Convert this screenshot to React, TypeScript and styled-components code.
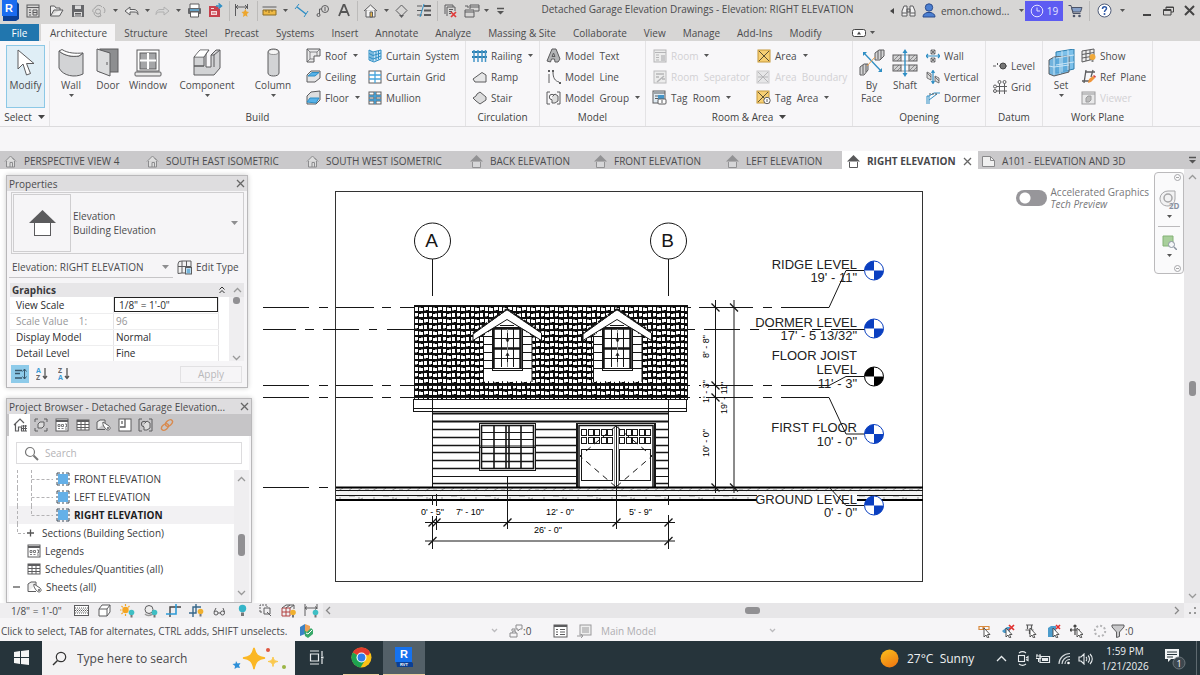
import React from "react";
import styled, { createGlobalStyle, css } from "styled-components";

const GlobalStyle = createGlobalStyle`
  * { box-sizing: border-box; }
  html, body { margin: 0; padding: 0; }
  body { background: #fff; color: #4b4b4d; font-family: "Open Sans", "Noto Sans", sans-serif; font-size: 10px; line-height: 14px; }
  button, input, select { font: inherit; color: inherit; margin: 0; padding: 0; border: 0; background: none; border-radius: 0; outline: none; }
  svg { display: block; flex: none; }
`;

/* ---------- icons ---------- */

const G = "#5c5c5e";
const B = "#2f8ec4";

type IconDef = { w: number; h: number; art: React.ReactNode };

const icons: Record<string, IconDef> = {
  revit: { w: 20, h: 21, art: <><path d="M3 1h13l3 3v15l-3 2H3z" fill="#0b3f94" /><rect x="2" y="0" width="15" height="16" fill="#1a6cf0" /><text x="9" y="12" fontSize="11" fontWeight="700" fill="#fff" textAnchor="middle" fontFamily="Liberation Sans, sans-serif">R</text></> },
  list: { w: 14, h: 14, art: <g fill="none" stroke={G}><rect x="1" y="1" width="12" height="12" /><path d="M1 3.500h12M3 6h2M3 8.500h2M3 11h2M7 6h4v5H7zM7 8.500h4" /></g> },
  open: { w: 15, h: 14, art: <path d="M1.500 12V2h4l1.500 2h4v2M1.500 12h9l3.500-6H5z" fill="#eee" stroke={G} /> },
  save: { w: 14, h: 14, art: <><path d="M1 1h12v12H1z" fill="#66676a" /><path d="M4 1.500h6v3.500H4zM3 8h8v4.500H3z" fill="#dcdcdc" /><path d="M4 9.500h6M4 11h6" stroke={G} /></> },
  sync: { w: 15, h: 14, art: <g fill="none" stroke="#a3a3a3"><path d="M2 8a3 3 0 0 1 2-4 4 4 0 0 1 7-1M3 8a4 4 0 0 0 6 4M12 3a4 4 0 0 1 1 6M9 9l1 3-3 1" /><circle cx="7" cy="7.500" r="2.500" /></g> },
  undo: { w: 15, h: 12, art: <path d="M1 6l5-4v2.500h4c2 0 4 1.500 4 5-1-2-2-2.500-4-2.500H6V10z" fill="#eee" stroke={G} /> },
  redo: { w: 15, h: 12, art: <path d="M14 6L9 2v2.500H5c-2 0-4 1.500-4 5 1-2 2-2.500 4-2.500h4V10z" fill="#d6d6d6" stroke="#b0b0b0" /> },
  print: { w: 15, h: 15, art: <><path d="M3 5V1h9v4" fill="#fff" stroke={G} /><rect x="1" y="5" width="13" height="6" rx="1" fill="#66676a" /><path d="M3 7h9" stroke="#62b5e5" strokeWidth="1.500" /><path d="M3.500 9h8v5h-8z" fill="#fff" stroke={G} /></> },
  pdf: { w: 15, h: 15, art: <><path d="M1 3h8l3 3v8H1z" fill="#c7414d" /><path d="M3 8h6v4H3zM3 5h3v1H3z" fill="#f4d9db" /><path d="M4 10h4" stroke="#c7414d" /><path d="M8 3h5M10.500 .500L13.500 3l-3 2.500" stroke={B} fill="none" strokeWidth="1.500" /></> },
  align: { w: 16, h: 15, art: <><path d="M1.500 1v12M13.500 1v5M2 4h11M4 2L2 4l2 2M11 2l2 2-2 2" fill="none" stroke={G} /><path d="M11.500 6l1 2.500 2.500.500-2 2 .500 3-2-1.500-2.500 1.500.500-3-2-2 2.500-.500z" fill="#eda62d" /></> },
  ruler: { w: 15, h: 10, art: <><path d="M.500 1h14" stroke={G} /><path d="M1 4h13v5H1z" fill="#efb944" stroke="#8b6c25" /><path d="M4 4v2M7 4v3M10 4v2" stroke="#8b6c25" /></> },
  dim: { w: 15, h: 15, art: <><path d="M3 4l9 7" stroke={B} strokeWidth="1.500" /><path d="M5 1L1 6M14 8l-4 6" stroke={B} /></> },
  tag: { w: 14, h: 14, art: <g fill="none" stroke={G}><circle cx="9" cy="5" r="3.500" /><path d="M5.500 5h-2v5M9 3v4" /><circle cx="2.500" cy="11" r="1.500" /></g> },
  letterA: { w: 12, h: 13, art: <path d="M1 12L5.500 1h1L11 12M3 8h6" fill="none" stroke="#555" strokeWidth="1.800" /> },
  house: { w: 15, h: 14, art: <><path d="M1 7l6.500-6L14 7M3 6v7h9V6" fill="#f2f2f2" stroke={G} /><path d="M7 8h2.500v5H7z" fill="#e8b64b" stroke={G} /></> },
  diamond: { w: 13, h: 14, art: <><path d="M6.500 1L12 6.500 6.500 12 1 6.500z" fill="none" stroke={G} /><path d="M4 11h5l-2.500 3z" fill={G} /></> },
  thin: { w: 15, h: 13, art: <><path d="M1 2h5M1 6.500h5M1 11h5" stroke={G} /><path d="M8 2h7M8 6.500h7M8 11h7" stroke={G} strokeWidth="2" /><path d="M8 0L4 13" stroke={B} /></> },
  closeViews: { w: 15, h: 14, art: <><path d="M2 10V1h8v2M4 12V3h8v4" fill="none" stroke={G} /><path d="M6 5.500h4M6 7.500h3M6 9.500h2" stroke={G} /><path d="M8 8l5 5M13 8l-5 5" stroke="#e03a3a" strokeWidth="1.700" /></> },
  switchViews: { w: 16, h: 14, art: <path d="M6 5V1h9v6h-4M1 6h9v7H1zM1 8h9M6 3h9M4 4V2H1" fill="none" stroke={G} /> },
  customize: { w: 9, h: 8, art: <><path d="M1 1.500h7" stroke="#555" strokeWidth="1.500" /><path d="M1 4h7L4.500 7.500z" fill="#555" /></> },
  caret: { w: 5, h: 3, art: <path d="M0 0h5L2.500 3z" fill="#555" /> },
  caretSoft: { w: 7, h: 4, art: <path d="M0 0h7L3.500 4z" fill="#8e8e90" /> },
  caretBig: { w: 7, h: 4, art: <path d="M0 0h7L3.500 4z" fill="#444" /> },
  back: { w: 4, h: 6, art: <path d="M4 0v6L0 3z" fill="#444" /> },
  binoculars: { w: 15, h: 14, art: <><path d="M1 12V7l2-5h3v10zM14 12V7l-2-5H9v10z" fill="#f0f0f0" stroke={G} /><path d="M6 5h3v3H6zM1 9h5M9 9h5" fill="none" stroke={G} /></> },
  user: { w: 14, h: 15, art: <><circle cx="7" cy="4.500" r="3.700" fill="#4b7fd1" stroke="#2c4c8c" /><path d="M1 14c0-3 2-3.500 4-4.500h4c2 1 4 1.500 4 4.500z" fill="#4b7fd1" stroke="#2c4c8c" /></> },
  clock: { w: 14, h: 14, art: <><circle cx="7" cy="7" r="5.800" fill="none" stroke="#e4e3ff" /><path d="M7 3.500V7h3" fill="none" stroke="#e4e3ff" /></> },
  cart: { w: 15, h: 14, art: <><path d="M.500 1.500h2.500l2 8h7.500" fill="none" stroke="#4c5468" /><path d="M3.500 3.500h10.500l-1.500 4.500H5z" fill="#86a0c8" stroke="#4c5468" /><circle cx="6" cy="12" r="1.300" fill="#4c5468" /><circle cx="11.500" cy="12" r="1.300" fill="#4c5468" /></> },
  help: { w: 15, h: 15, art: <><circle cx="7.500" cy="7.500" r="6.500" fill="#fff" stroke="#4f5c78" /><path d="M5.500 6c0-3 4-3 4-.500 0 1.500-2 1.500-2 3.500" fill="none" stroke="#2f5aa8" strokeWidth="1.500" /><circle cx="7.500" cy="11" r="1" fill="#2f5aa8" /></> },
  minimize: { w: 8, h: 12, art: <path d="M0 10h8" stroke="#444" strokeWidth="2" /> },
  restore: { w: 11, h: 10, art: <path d="M3 3V1h7.500v5H8M.500 3.500h7.500v5.500H.500zM.500 4.500H8M3 1.500h7.500" fill="none" stroke="#444" /> },
  closeX: { w: 11, h: 11, art: <path d="M1 1l9 9M10 1l-9 9" stroke="#444" strokeWidth="2" /> },
  closeSm: { w: 9, h: 9, art: <path d="M1 1l7 7M8 1L1 8" stroke="#666" strokeWidth="1.300" /> },
  ribbonState: { w: 14, h: 8, art: <><rect x=".500" y=".500" width="13" height="7" rx="2" fill="#fff" stroke="#444" /><path d="M5 5.500h4L7 2.500z" fill="#444" /></> },

  cursor: { w: 18, h: 28, art: <path d="M1 1v19l5-5 3.500 11 4-1.500L9.500 14.500h7.500z" fill="#fff" stroke={G} /> },
  wall: { w: 26, h: 28, art: <><path d="M1 2c6 5 14 6 20 5l4-3v21c-8 4-20 2-24-6z" fill="#d2d3d5" stroke={G} /><path d="M1 2l3-1.500c6 4 14 4 21 3.500l-4 3C14 8 7 7 1 2z" fill="#fff" stroke={G} /></> },
  door: { w: 24, h: 29, art: <><rect x="4" y="1" width="18" height="23" fill="#8d8e90" stroke={G} /><path d="M1 1l13 4v23L1 23z" fill="#dcddde" stroke={G} /><path d="M11 14v3" stroke={G} /></> },
  window: { w: 28, h: 28, art: <><rect x="3" y="1" width="22" height="21" fill="#fff" stroke={G} /><rect x="6" y="4" width="16" height="16" fill="#a5a6a8" stroke={G} /><path d="M14 4v16M6 11.500h16" stroke="#fff" strokeWidth="2" /><rect x="1" y="23" width="26" height="4" rx="1" fill="#e8e8e8" stroke={G} /></> },
  component: { w: 28, h: 29, art: <><path d="M1 9l6-7h9l-3 3v14h5V7l5-5h4v18l-6 7H1z" fill="#d2d3d5" stroke={G} /><path d="M1 9h10l5-7M11 9v9H1M18 7h3l6-5M21 7v12M1 18h10" fill="none" stroke={G} /><path d="M2 8.500l5-6h8l-4.500 6z" fill="#fff" /></> },
  column: { w: 13, h: 29, art: <><path d="M1 4v21c0 4 11 4 11 0V4c0-4-11-4-11 0z" fill="#d2d3d5" stroke={G} /><ellipse cx="6.500" cy="4" rx="5" ry="2.500" fill="#f6f6f6" stroke={G} strokeWidth=".600" /></> },
  roof: { w: 15, h: 15, art: <><path d="M1 1h13v7H8v6H1z" fill="#e9e9ea" stroke={G} /><path d="M14 1l-3 3v4M11 4H4v7l4 0M4 11l-3 3M1 1l3 3" fill="none" stroke={G} strokeWidth=".700" /></> },
  ceiling: { w: 15, h: 15, art: <><path d="M1 6l4-4h9v7l-5 4H1z" fill="#e4e4e5" stroke={G} /><path d="M2 7l4-3.500h7L9 7z" fill="#56b2ea" stroke={B} /></> },
  floor: { w: 15, h: 15, art: <><path d="M1 6l4-4 9-1v9l-4 4H1z" fill="#dedfe0" stroke={G} /><path d="M1 12l3-4h9l-3 5z" fill="#56b2ea" stroke={B} /></> },
  curtainSystem: { w: 14, h: 15, art: <><path d="M1 2l4 2 8-2v9l-7 3-5-2z" fill="#c7e4f6" stroke={B} /><path d="M5 4v9M8 3.500v9M10.500 3v8.500M1 5.500l4 2 8-2.500M1 9l4 2 8-3M3 3v9" fill="none" stroke={B} /></> },
  curtainGrid: { w: 14, h: 14, art: <><rect x="1" y="1" width="12" height="12" fill="#fff" stroke={G} /><path d="M7 1v12M1 5h12M1 9h12" stroke="#45a5de" strokeWidth="1.300" /></> },
  mullion: { w: 14, h: 14, art: <><rect x="1" y="1" width="12" height="12" fill="#fff" stroke={G} /><path d="M7 1v12M1 5h12M1 9h12" stroke={G} strokeWidth="3" /><path d="M7 1v12M1 5h12M1 9h12" stroke="#45a5de" strokeWidth="1.500" /></> },
  railing: { w: 15, h: 14, art: <><path d="M0 3h15M0 8h15" stroke="#2a7cad" strokeWidth="2" /><path d="M2 1v12M6 1v12M10 1v12M13.500 1v12" stroke="#4596c7" strokeWidth="1.500" /></> },
  ramp: { w: 15, h: 12, art: <path d="M1 8l9-6.500L14 4v7H3z" fill="#e6e6e7" stroke={G} /> },
  stair: { w: 15, h: 14, art: <path d="M1 7l3-2 1-2 3-2 6 5v3l-6 4-4-3z" fill="#dcdcdd" stroke={G} /> },
  modelText: { w: 15, h: 15, art: <path d="M1 13L6 1h4l4 10-2 3H9L8.500 11h-3L4.500 14zM6 8.500L7.500 5 9 8.500z" fill="#b4b5b7" stroke={G} /> },
  modelLine: { w: 14, h: 14, art: <><path d="M2 4v9M6 2c0 6 2 9 6 10" fill="none" stroke={G} /><path d="M1 1h2M5 1h2M12 13h2" stroke={G} strokeWidth="2" /></> },
  modelGroup: { w: 15, h: 14, art: <g fill="none" stroke={G}><path d="M4 1H1v12h3M11 1h3v12h-3" /><circle cx="6" cy="6" r="2.700" /><path d="M6.500 5.500L9 3l3 2v5l-3 2H6V9" fill="#ddd" /></g> },
  room: { w: 14, h: 14, art: <><rect x="1" y="1" width="12" height="12" fill="#ececec" stroke="#b5b5b7" /><path d="M2 3.500h11M3 6h3M3 8.500h3M3 11h3" stroke="#b5b5b7" /><path d="M8 6h4v6H8z" fill="#c8c8ca" /></> },
  roomSep: { w: 14, h: 14, art: <><rect x="1" y="1" width="12" height="12" fill="#ececec" stroke="#bcbcbe" /><path d="M3 4h8M3 7h3M4 12l7-6M9 9h3" stroke="#b5b5b7" strokeWidth="1.500" /></> },
  tagRoom: { w: 15, h: 15, art: <><rect x="1" y="1" width="12" height="12" fill="#dfeaf2" stroke={G} /><path d="M2 3h11M3 6h4M3 8.500h3" stroke={G} /><path d="M6 5h6v4H6z" fill="#4595c8" /><rect x="6" y="9" width="8" height="5" rx="1" fill="#fff" stroke={G} /><path d="M10 10v3" stroke={G} /></> },
  area: { w: 14, h: 14, art: <><rect x="1" y="1" width="12" height="12" fill="#f7cf73" stroke="#c4973a" /><path d="M2 2l10 10M12 2L2 12" stroke="#5d5134" /></> },
  areaBoundary: { w: 15, h: 14, art: <><rect x="1" y="1" width="12" height="12" fill="#e6e6e7" stroke="#c9c9cb" /><path d="M2 2l10 10M12 2L2 12M2 7h10" stroke="#b5b5b7" /></> },
  tagArea: { w: 15, h: 15, art: <><rect x="1" y="1" width="12" height="12" fill="#f7cf73" stroke="#c4973a" /><path d="M2 2l10 10M12 2L2 12" stroke="#5d5134" /><circle cx="11" cy="10.500" r="3.200" fill="#fff" stroke={G} /><path d="M11 9v3" stroke={G} /></> },
  byFace: { w: 26, h: 27, art: <><path d="M16 4l4-3h5v6l-4 4h-5zM1 18l4-3h4v6l-4 5H1z" fill="#d5d5d6" stroke={G} /><path d="M19 2v8M22 1v9M4 16v9M7 15v8" stroke={G} /><path d="M5 4l17 18" stroke={B} strokeWidth="1.300" /><path d="M4 3h4L4 7zM23 23v-4l-4 4z" fill={B} /><path d="M16 8l-8 9" stroke="#e7a050" /></> },
  shaft: { w: 26, h: 28, art: <><g fill="#d2d2d3" stroke={G}><rect x="1" y="6" width="8" height="6" /><rect x="17" y="6" width="8" height="6" /><rect x="1" y="16" width="8" height="6" /><rect x="17" y="16" width="8" height="6" /></g><path d="M2 11l5-5M5 12l4-4M18 11l5-5M21 12l4-4M2 21l5-5M5 22l4-4M18 21l5-5M21 22l4-4M9 6h8M9 12h8M9 16h8M9 22h8" stroke={G} strokeWidth=".600" /><path d="M13 3v22" stroke={B} strokeWidth="1.400" /><path d="M10.500 4L13 0l2.500 4zM10.500 24l2.500 4 2.500-4z" fill={B} /></> },
  wallOpen: { w: 14, h: 14, art: <><path d="M5 1h4v4H5zM5 9h4v4H5zM5 1l4 4M9 1L5 5M5 9l4 4M9 9l-4 4" fill="#ddd" stroke={G} strokeWidth=".800" /><path d="M0 7h14M2 5L0 7l2 2M12 5l2 2-2 2M5 7h4" fill="none" stroke={B} strokeWidth="1.200" /></> },
  vertical: { w: 14, h: 14, art: <><path d="M1 2l4 2v6L1 8zM9 6l4 2v5l-4-2zM1 3l4 4M9 7l4 4" fill="#ddd" stroke={G} strokeWidth=".800" /><path d="M7 1v12M5.500 3L7 .500 8.500 3M5.500 11L7 13.500 8.500 11" fill="none" stroke={B} strokeWidth="1.200" /></> },
  dormer: { w: 14, h: 14, art: <><path d="M1 13V5h2l5-3h6M3 5v8M3 9l8-6" fill="none" stroke={B} /><path d="M3 3h9" stroke={G} strokeDasharray="2 1" /></> },
  level: { w: 14, h: 8, art: <><path d="M0 4h3M6 4h8" stroke={G} /><path d="M4.500 1v2" stroke={G} /><circle cx="10" cy="4" r="3" fill="#777" stroke="#444" /></> },
  grid: { w: 14, h: 14, art: <g fill="none" stroke={G}><circle cx="6.500" cy="2" r="1.500" /><circle cx="11.500" cy="2" r="1.500" /><circle cx="2" cy="6.500" r="1.500" /><circle cx="2" cy="11" r="1.500" /><path d="M6.500 3.500V14M11.500 3.500V14M3.500 6.500H14M3.500 11H14" /></g> },
  setPlane: { w: 27, h: 28, art: <><path d="M8 3l18-3v20L8 24z" fill="#7cc0ea" stroke="#2a7cad" /><path d="M1 11l5-3 15-1v16L6 27l-5-2z" fill="#5aa7d8" fillOpacity=".850" stroke={G} /><path d="M14 2v21M20 1v20M8 9l18-3M8 16l18-3M6 8v18M12 8v17M1 17l5 1 15-2" fill="none" stroke="#d5ebf8" strokeWidth=".900" /></> },
  show: { w: 15, h: 15, art: <><path d="M1 3l12-2v10L1 14zM5 2v11M9 2v10M1 6.500L13 4.500M1 10l12-2" fill="#eee" stroke={G} /><circle cx="11.500" cy="9" r="3" fill="#f0a93a" /><path d="M10.500 12h2v2h-2z" fill="#888" /></> },
  refPlane: { w: 15, h: 15, art: <><path d="M1 12h7M4 3h10M5 1L3 14M12 1l-2 7" fill="none" stroke={G} strokeWidth="1.300" /><path d="M7 14l1-4 4-3 2 2-4 4z" fill="#f0953a" /><path d="M12 7l2 2 1-1.500L13 6z" fill="#d9433f" /></> },
  viewer: { w: 15, h: 14, art: <><rect x="1" y="1" width="13" height="12" fill="#e8e8e9" stroke="#9b9b9d" /><path d="M1 3h13" stroke="#9b9b9d" /><path d="M5 7l2-2h3v4l-2 2H5z" fill="#bbb" stroke="#9b9b9d" /></> },

  tab3d: { w: 13, h: 13, art: <><path d="M1 6.500L6.500 1 12 6.500M2.500 6v6h8V6" fill="#ddd" stroke="#8b8b8d" /><path d="M6 12V7.500h2.500V12M8.500 3l2 2" fill="none" stroke="#8b8b8d" /></> },
  tabElev: { w: 13, h: 13, art: <><path d="M0 6.500L6.500 0 13 6.500z" fill="#929294" /><path d="M2.500 7v5.500h8V7" fill="#d6d6d8" stroke="#929294" /></> },
  tabElevOn: { w: 13, h: 13, art: <><path d="M0 6.500L6.500 0 13 6.500z" fill="#59595b" /><path d="M2.500 7v5.500h8V7" fill="#fff" stroke="#59595b" /></> },
  tabSheet: { w: 13, h: 11, art: <><path d="M.500.500h8l4 4v6H.500z" fill="#f0f0f0" stroke="#88888a" /><path d="M8.500.500v4h4" fill="none" stroke="#88888a" /></> },
  elevThumb: { w: 27, h: 28, art: <><path d="M0 14L13.500 1 27 14z" fill="#5b5b5d" /><rect x="5.500" y="13.500" width="16" height="13" fill="#fff" stroke="#5b5b5d" /></> },
  editType: { w: 15, h: 15, art: <><path d="M2 1.500L5 1h9v12H5l-4 .500V4zM1 6.500h13M5 1v12M9.500 1v12" fill="#f2f2f2" stroke={G} /><rect x="8.500" y="7.500" width="6" height="6.500" fill="#bcdcf0" stroke={G} /><path d="M10 10h3M10 12h3" stroke={B} /></> },
  chevUp: { w: 9, h: 6, art: <path d="M1 5l3.500-3.500L8 5" fill="none" stroke="#999" strokeWidth="1.300" /> },
  chevDown: { w: 9, h: 6, art: <path d="M1 1l3.500 3.500L8 1" fill="none" stroke="#999" strokeWidth="1.300" /> },
  chevFaint: { w: 7, h: 5, art: <path d="M1 1l2.500 2.500L6 1" fill="none" stroke="#bcbbbe" strokeWidth="1.300" /> },
  chevLeft: { w: 6, h: 9, art: <path d="M5 1L1.500 4.500 5 8" fill="none" stroke="#888" strokeWidth="1.300" /> },
  chevRight: { w: 6, h: 9, art: <path d="M1 1l3.500 3.500L1 8" fill="none" stroke="#888" strokeWidth="1.300" /> },
  collapse: { w: 6, h: 8, art: <path d="M.500 3.500L3 1l2.500 2.500M.500 7L3 4.500 5.500 7" fill="none" stroke="#333" /> },
  sortCat: { w: 13, h: 12, art: <><path d="M1 2.500h7M1 5.500h5M1 10h7" stroke="#38566a" strokeWidth="1.300" /><path d="M10.500 1v10M8.500 3.500L10.500 1l2 2.500M8.500 8.500l2 2.500 2-2.500" fill="none" stroke="#38566a" /></> },
  sortAZ: { w: 12, h: 14, art: <><text x="0" y="6" fontSize="7" fontWeight="700" fill="#3b9bd6">A</text><text x="0" y="13" fontSize="7" fontWeight="700" fill="#666">Z</text><path d="M9 1v10M7 9l2 2.500L11 9" fill="none" stroke="#555" strokeWidth="1.300" /></> },
  sortZA: { w: 12, h: 14, art: <><text x="0" y="6" fontSize="7" fontWeight="700" fill="#666">Z</text><text x="0" y="13" fontSize="7" fontWeight="700" fill="#3b9bd6">A</text><path d="M9 1v10M7 9l2 2.500L11 9" fill="none" stroke="#555" strokeWidth="1.300" /></> },

  pbHome: { w: 14, h: 14, art: <><path d="M1 7l6-6 4 4M2.500 6v7h3V9h3v4" fill="none" stroke={G} strokeWidth="1.200" /><path d="M8 8h6M8 10.500h6M8 13h6M10.500 7v6M12.500 7v6" stroke={G} /></> },
  pbViews: { w: 14, h: 14, art: <g fill="none" stroke={G}><path d="M4 1H1v3M10 1h3v3M4 13H1v-3M10 13h3v-3" /><path d="M4 6l2-2h4v4l-2 2H4z" fill="#ddd" /></g> },
  pbLegend: { w: 14, h: 14, art: <g fill="none" stroke={G}><rect x="1" y="1" width="12" height="12" fill="#fff" /><path d="M1 3h12" strokeWidth="2" /><path d="M3 6.500h2v2H3zM6.500 6.500h2v2h-2zM10 6h1.500v3H10M3 10.500h2M6.500 10.500h2M10 11h2" strokeWidth=".800" /></g> },
  pbTable: { w: 14, h: 12, art: <><rect x="1" y="1" width="12" height="10" fill="#fff" stroke={G} /><path d="M1 2h12" stroke={G} strokeWidth="2" /><path d="M1 5.500h12M1 8.500h12M5 1v10M9 1v10" stroke={G} /></> },
  pbSheet: { w: 15, h: 12, art: <><path d="M1 10.500V3l3-2h5v3M1 10.500h8" fill="#eee" stroke={G} /><path d="M7 3l6 4c2 2 1 4-1 4s-6-5-5-8z" fill="#fff" stroke={G} /><circle cx="12" cy="9" r="1" fill={G} /></> },
  pbFamily: { w: 14, h: 14, art: <><rect x="1" y="1" width="12" height="12" fill="#fff" stroke={G} /><path d="M7 1v8H2" fill="none" stroke={G} strokeWidth="1.300" /><path d="M3 3h2v3H3z" fill="#999" /></> },
  pbLink: { w: 14, h: 14, art: <g fill="none" stroke="#d98a4e" strokeWidth="1.400"><ellipse cx="5" cy="9" rx="4" ry="2.500" transform="rotate(-40 5 9)" /><ellipse cx="9" cy="5" rx="4" ry="2.500" transform="rotate(-40 9 5)" /></g> },
  search: { w: 15, h: 15, art: <><circle cx="6" cy="6" r="4.500" fill="none" stroke="#777" strokeWidth="1.200" /><path d="M9.500 9.500L14 14" stroke="#777" strokeWidth="2" /></> },
  viewSq: { w: 14, h: 14, art: <><rect x="2" y="2" width="10" height="10" fill="#64b0e8" /><path d="M1 4V1h3M10 1h3v3M13 10v3h-3M4 13H1v-3M6 1h2M6 13h2M1 6v2M13 6v2" fill="none" stroke="#3d4d5a" /></> },

  vcDetail: { w: 15, h: 11, art: <><rect x=".500" y=".500" width="14" height="10" fill="#fff" stroke={G} /><path d="M1 3h13M1 5.500h13M1 8h13" stroke={G} strokeDasharray="1 1" /><path d="M2 4.300h12M2 6.800h12" stroke="#999" strokeDasharray="1 1" /></> },
  vcStyle: { w: 13, h: 13, art: <path d="M1 5l3-4h8v7l-3 4H1zM1 5h8v7M9 5l3-4" fill="#fff" stroke={G} /> },
  vcSun: { w: 15, h: 14, art: <><circle cx="5.500" cy="6" r="3.200" fill="#f5a623" /><path d="M5.500 0v2M0 6h1.500M1.500 2l1.300 1.300M9.500 2L8.200 3.300M1.500 10l1.300-1.300M5.500 10v2" stroke="#f5a623" strokeWidth="1.200" /><circle cx="11.500" cy="8.500" r="2.800" fill="#3fbfc4" /><path d="M10.500 11h2v2.500h-2z" fill="#777" /></> },
  vcShadow: { w: 15, h: 14, art: <><circle cx="6" cy="5.500" r="4" fill="#eee" stroke={G} /><path d="M2 10c3 3 6 1 8 0" stroke="#999" fill="none" strokeWidth="1.500" /><circle cx="11.500" cy="8.500" r="2.800" fill="#3fbfc4" /><path d="M10.500 11h2v2.500h-2z" fill="#777" /></> },
  vcCrop: { w: 15, h: 13, art: <><path d="M4 13V3h11" fill="none" stroke="#444" strokeWidth="1.400" /><path d="M0 10h10V0" fill="none" stroke="#2e9bd6" strokeWidth="1.600" /></> },
  vcCropVis: { w: 15, h: 13, art: <><path d="M4 13V3h8M0 9h7V0" fill="none" stroke="#38688a" strokeWidth="1.400" /><circle cx="11.500" cy="7.500" r="2.800" fill="#f0b02f" /><path d="M10.500 10h2v2.500h-2z" fill="#777" /></> },
  vcGlasses: { w: 13, h: 10, art: <g fill="none" stroke={G}><circle cx="3" cy="7" r="2" /><circle cx="9.500" cy="7" r="2" /><path d="M5 7h2.500M1 6l2-4M11.500 6L10 2" /></g> },
  vcBulb: { w: 9, h: 13, art: <><circle cx="4.500" cy="4.500" r="3.700" fill="#35b5c9" /><path d="M3 8.500h3v3.500H3z" fill="#777" /></> },
  vcTemp: { w: 13, h: 13, art: <g fill="none" stroke={G}><path d="M1 8V1h7v2M1 8h2" strokeDasharray="2 1" /><path d="M5 4h6v6H5zM8 8l4 4" /></g> },
  vcAnalytical: { w: 16, h: 14, art: <><path d="M1 4v8h8M1 8h8M5 4v8M1 4h8v8" fill="none" stroke="#b14040" /><path d="M1 4l4-3h8v4M9 4l4-3M5 4l4-3" fill="none" stroke={G} /><circle cx="12" cy="8.500" r="2.800" fill="#f0b02f" /><path d="M11 11h2v2.500h-2z" fill="#777" /></> },
  vcConstraint: { w: 15, h: 14, art: <><path d="M1 0v12M13 0v5M1 4h12M3 2.500L1 4l2 1.500M11 2.500L13 4l-2 1.500" fill="none" stroke={G} /><circle cx="11.500" cy="8.500" r="2.800" fill="#3fbfc4" /><path d="M10.500 11h2v2.500h-2z" fill="#777" /></> },
  stShare: { w: 15, h: 15, art: <><path d="M1 4l5-3v10l-5 2z" fill="#3c82c4" /><path d="M6 1l5 2v8l-5-1z" fill="#eda25a" /><path d="M5 7l3 2 4-4 2 2v4l-5 4-3-2z" fill="#38a869" /><path d="M7 10l2 1 4-4" stroke="#fff" fill="none" /></> },
  stWork: { w: 14, h: 14, art: <path d="M7 1h6v4h-2L9 7V5H7zM1 9h7v4H1zM3 9l1-2h2l1 2M3 7V5h3v2" fill="#f6f5f7" stroke="#8b8b8d" /> },
  stOptions: { w: 15, h: 14, art: <><rect x="1" y="1" width="13" height="12" fill="#fff" stroke={G} /><path d="M1 2h13" stroke={G} strokeWidth="2" /><path d="M3 5.500h2M3 8h2M3 10.500h2M7 5.500h5M7 8h5M7 10.500h5" stroke={G} /></> },
  stMain: { w: 15, h: 14, art: <><rect x="3" y="1" width="11" height="10" fill="#eee" stroke="#9a9a9c" /><path d="M5 4h7M5 6h7M5 8h7M0 12h6M4 10l2 2-2 2" fill="none" stroke="#9a9a9c" /></> },
  selLink: { w: 13, h: 14, art: <><path d="M1 2.500h4v3H1zM6 2.500h5v3H6z" fill="none" stroke="#d98a3e" strokeWidth="1.200" /><path d="M6 4v9l2-2 1.500 3 1.300-.600L9.500 10.500h2.500z" fill="#fff" stroke="#444" strokeWidth=".900" /></> },
  selUnder: { w: 14, h: 14, art: <><path d="M1 7l5-4h3v6H3z" fill="#4c9ccc" /><path d="M5 4v9l2-2 1.500 3 1.300-.600L8.500 10.500H11z" fill="#fff" stroke="#444" strokeWidth=".900" /><path d="M8 1l5 5M13 1L8 6" stroke="#e03030" strokeWidth="1.700" /></> },
  selPin: { w: 13, h: 14, art: <><path d="M2 1h7M3.500 1v4M7.500 1v4M1.500 6h8M5.500 6v4" fill="none" stroke={G} strokeWidth="1.200" /><path d="M6 4v9l2-2 1.500 3 1.300-.600L9.500 10.500h2.500z" fill="#fff" stroke="#444" strokeWidth=".900" /></> },
  selFace: { w: 14, h: 14, art: <><path d="M1 4l3-2h5v9l-2 2H1z" fill="#4c9ccc" /><path d="M6 4v9l2-2 1.500 3 1.300-.600L9.500 10.500H12z" fill="#fff" stroke="#444" strokeWidth=".900" /><path d="M9 1l4 4M13 1L9 5" stroke="#e03030" strokeWidth="1.600" /></> },
  selDrag: { w: 13, h: 14, art: <><path d="M0 6h10M5 1v10M3.500 2.500L5 1l1.500 1.500M1.500 4.500L0 6l1.500 1.500" fill="none" stroke="#444" strokeWidth="1.200" /><path d="M7 4v9l2-2 1.500 3 1.300-.600-1.300-2.900H13z" fill="#fff" stroke="#444" strokeWidth=".900" /></> },
  bgProc: { w: 14, h: 14, art: <circle cx="7" cy="7" r="5.200" fill="none" stroke="#b4b4b6" strokeWidth="2" strokeDasharray="2 2" /> },
  filter: { w: 14, h: 14, art: <path d="M1 1h12v2L8.500 8v4.500l-3 1V8L1 3z" fill="#c9c9cb" stroke={G} /> },
  grip: { w: 9, h: 9, art: <path d="M6 1h2v2H6zM6 6h2v2H6zM1 6h2v2H1z" fill="#999" /> },

  win: { w: 15, h: 15, art: <path d="M0 2l6-1v6H0zM7 1l8-1v7H7zM0 8h6v6l-6-1zM7 8h8v7l-8-1z" fill="#f5f5f5" /> },
  glass: { w: 15, h: 15, art: <><circle cx="9" cy="6" r="4.700" fill="none" stroke="#333" strokeWidth="1.200" /><path d="M5.500 9.500L1 14" stroke="#333" strokeWidth="1.400" /></> },
  sparkle: { w: 54, h: 24, art: <><path d="M22 1c1.500 7 4 9 11 10-7 1-9.500 3-11 11-1.500-8-4-10-11-11 7-1 9.500-3 11-10z" fill="#fbb724" stroke="#fbb724" strokeWidth="1.500" /><path d="M41 10c.500 3 1.500 4 5 4.500-3.500.500-4.500 1.500-5 5-.500-3.500-1.500-4.500-5-5 3.500-.500 4.500-1.500 5-4.500z" fill="#fbc94d" stroke="#fbc94d" /><path d="M4 14l1.500 2.500 3-.500-1.500 2.500 1 2.500-3-.500-2.500 1.500.500-3L.500 17l3-.500z" fill="#2c8fd8" /><circle cx="36" cy="3" r="2" fill="#e0563f" /><circle cx="52" cy="20" r="2" fill="#9bb545" /></> },
  taskview: { w: 15, h: 15, art: <g fill="none" stroke="#e6eaec" strokeWidth="1.200"><path d="M1 1h9M1 14h9M1.500 4h8v7h-8zM13 1v5M13 9v5" /><path d="M12 7.500h2.500" strokeWidth="2" /></g> },
  chrome: { w: 21, h: 21, art: <><circle cx="10.500" cy="10.500" r="10" fill="#fbc116" /><path d="M10.500 10.500L1.800 5.500A10 10 0 0 1 19.200 5.500z" fill="#e33b2e" /><path d="M10.500 10.500h0L1.800 5.500A10 10 0 0 0 9.500 20.500l5-8z" fill="#1ea350" /><path d="M10.500 5.500h8.700l-2 3z" fill="#e33b2e" /><circle cx="10.500" cy="10.500" r="5" fill="#fff" /><circle cx="10.500" cy="10.500" r="3.900" fill="#2f7de9" /></> },
  revitTask: { w: 20, h: 21, art: <><path d="M2 14h14l3 2v4H3z" fill="#0b3f94" /><rect x="1" y="0" width="17" height="15" fill="#1672ee" /><text x="10" y="11" fontSize="11" fontWeight="700" fill="#fff" textAnchor="middle" fontFamily="Liberation Sans, sans-serif">R</text><text x="10" y="19" fontSize="4" fontWeight="700" fill="#fff" textAnchor="middle" fontFamily="Liberation Sans, sans-serif">RVT</text></> },
  sun: { w: 19, h: 19, art: <><defs><linearGradient id="sunFill" x1="0" y1="0" x2="0.500" y2="1"><stop offset="0" stopColor="#fdc11c" /><stop offset="1" stopColor="#f07f13" /></linearGradient></defs><circle cx="9.500" cy="9.500" r="9" fill="url(#sunFill)" /></> },
  trayUp: { w: 11, h: 7, art: <path d="M1 6l4.500-4.500L10 6" fill="none" stroke="#e8ecee" strokeWidth="1.300" /> },
  trayMeet: { w: 12, h: 15, art: <g fill="none" stroke="#e8ecee" strokeWidth="1.100"><path d="M2 2c2-1.500 5-1.500 7 0M2 13c2 1.500 5 1.500 7 0" /><rect x="1.500" y="4.500" width="6" height="6" /><path d="M9 7l2-1.500v4L9 8.500" /></g> },
  trayBattery: { w: 15, h: 12, art: <><path d="M4 3.500h9.500v6H4z" fill="none" stroke="#e8ecee" strokeWidth="1.200" /><path d="M6 5h6v3H6z" fill="#e8ecee" /><path d="M1 1v2M4 1v2M0 3h5v2.500H0zM2.500 5v4" stroke="#e8ecee" fill="none" /></> },
  trayWifi: { w: 13, h: 13, art: <g fill="none" stroke="#d6dbde" strokeWidth="1.100"><path d="M1 12C1 6 6 1.500 12 1.500M4 12c0-4 3.500-7.500 8-7.500M7 12c0-2.500 2-4.500 5-4.500" /><circle cx="10.500" cy="11" r="1.300" fill="#fff" stroke="none" /></g> },
  trayVol: { w: 15, h: 12, art: <g fill="none" stroke="#e8ecee" strokeWidth="1.100"><path d="M1 4h2l3-3v10L3 8H1zM8 4c1 1 1 3 0 4M10 2.500c2 2 2 5 0 7M12 1c3 3 3 7 0 10" /></g> },
  trayNote: { w: 22, h: 22, art: <><path d="M1 1h14v10H7l-3 3v-3H1z" fill="#f2f4f5" /><path d="M3 4h10M3 6.500h10M3 9h6" stroke="#26343b" /><circle cx="15" cy="15" r="6" fill="#3d474e" stroke="#6b757b" /><text x="15" y="18.500" fontSize="9" fill="#fff" textAnchor="middle">1</text></> },
  navWheel: { w: 22, h: 22, art: <><path d="M2 9a8 8 0 0 1 8-7h7v8a7 7 0 0 1-7 7c-5 0-8-3-8-8z" fill="#f2f2f3" stroke="#a6a6a8" /><circle cx="10" cy="9" r="4" fill="none" stroke="#a6a6a8" strokeWidth="1.500" /><text x="11" y="20" fontSize="8" fontWeight="700" fill="#8890a0">2D</text></> },
  navZoom: { w: 15, h: 15, art: <><path d="M1 1h10v10H1z" fill="#a8cf9b" stroke="#84b277" /><circle cx="9.500" cy="9.500" r="3" fill="#f4f6f8" stroke="#8a93a0" /><path d="M12 12l3 3" stroke="#8a93a0" strokeWidth="1.500" /></> },
  navDot: { w: 7, h: 7, art: <><circle cx="3.500" cy="3.500" r="3" fill="none" stroke="#a6a6a8" /><path d="M2 3.500h3" stroke="#a6a6a8" /></> },
};

const Icon = ({ name }: { name: string }) => {
  const { w, h, art } = icons[name];
  return <svg width={w} height={h} viewBox={`0 0 ${w} ${h}`} aria-hidden="true">{art}</svg>;
};

/* ---------- shell ---------- */

const Shell = styled.div`
  min-height: 100vh; display: flex; flex-direction: column; overflow: hidden;
`;

const TitleBar = styled.header`
  display: flex; align-items: center; height: 24px; padding-bottom: 3px; background: #d7d6d5;
`;
const ToolButton = styled.button<{ $w?: number }>`
  width: ${(p) => p.$w ?? 21}px; height: 20px; flex: none; display: flex; align-items: center; justify-content: center;
`;
const ToolDivider = styled.span`
  width: 4px; height: 20px; flex: none; border-right: 1px solid #bcbbba;
`;
const WindowButtons = styled.div`
  display: flex; padding-left: 8px; flex: none;
`;
const DocTitle = styled.h1`
  flex: 1; margin: 0; padding-bottom: 4px; font-size: 10px; font-weight: 400; text-align: center; white-space: nowrap; overflow: hidden; color: #4b4b4d;
`;
const Account = styled.button`
  display: flex; align-items: center; gap: 5px; width: 104px; height: 20px; padding: 0 2px 0 3px; flex: none; white-space: nowrap;
`;
const TrialBadge = styled.button`
  width: 38px; height: 20px; margin: 0 2px; flex: none; display: flex; align-items: center; justify-content: center; gap: 3px;
  background: #5d5bf2; color: #e4e3ff;
`;

const RibbonTabs = styled.nav`
  display: flex; align-items: stretch; height: 17px; background: #d7d6d5;
`;
const RibbonTab = styled.button<{ $kind?: "file" | "active" }>`
  padding: 0 8px 0 9px; height: 17px; line-height: 16px; white-space: nowrap; flex: none;
  ${(p) => p.$kind === "file" && css`width: 39px; margin-right: 2px; padding: 0; background: #2176ae; color: #fff;`}
  ${(p) => p.$kind === "active" && css`background: #f6f5f6; height: 18px;`}
`;
const RibbonState = styled.button`
  display: flex; align-items: center; gap: 4px; margin-left: 22px;
`;

const Ribbon = styled.section`
  display: flex; height: 86px; background: #f8f7f9; border-bottom: 1px solid #dcdbdd; flex: none;
`;
const RibbonSpacer = styled.div`
  height: 24px; background: #f7f6f8; flex: none;
`;
const Panel = styled.div<{ $w: number }>`
  width: ${(p) => p.$w}px; flex: none; display: flex; flex-direction: column; border-right: 1px solid #e4e3e5;
`;
const PanelBody = styled.div<{ $pad?: number }>`
  flex: 1; display: flex; align-items: flex-start; padding: 4px 0 0 ${(p) => p.$pad ?? 6}px;
`;
const PanelName = styled.button`
  height: 17px; display: flex; align-items: center; justify-content: center; gap: 6px; padding-bottom: 2px; color: #3f3f41;
`;
const BigButton = styled.button<{ $w: number; $on?: boolean }>`
  width: ${(p) => p.$w}px; height: 63px; flex: none; display: flex; flex-direction: column; align-items: center; line-height: 13px;
  border: 1px solid ${(p) => (p.$on ? "#8cc8e6" : "transparent")}; background: ${(p) => (p.$on ? "#dfeef6" : "none")};
`;
const BigArt = styled.span`
  height: 33px; display: flex; align-items: center; justify-content: center;
`;
const BigCaret = styled.span`
  height: 7px; display: flex; align-items: center;
`;
const Stack = styled.div<{ $w: number; $pad?: number }>`
  width: ${(p) => p.$w}px; padding-left: ${(p) => p.$pad ?? 0}px; height: 63px; flex: none; display: flex; flex-direction: column; justify-content: center;
`;
const SmallButton = styled.button<{ $off?: boolean }>`
  height: 21px; display: flex; align-items: center; gap: 4px; white-space: pre; color: ${(p) => (p.$off ? "#d2d1d4" : "#4b4b4d")};
`;
const SmallArt = styled.span`
  width: 15px; display: flex; justify-content: center;
`;
const SmallCaret = styled.span`
  padding-left: 2px;
`;

const ViewTabs = styled.nav`
  display: flex; height: 18px; background: #cac9cb; flex: none;
`;
const ViewTab = styled.button<{ $w: number; $on?: boolean }>`
  width: ${(p) => p.$w}px; flex: none; display: flex; align-items: center; gap: 7px; padding: 2px 0 0 4px; white-space: nowrap;
  ${(p) => p.$on && css`background: #fff; font-weight: 700; color: #47474a; padding-left: 5px;`}
`;
const TabMenu = styled.button`
  margin-left: auto; width: 16px; display: flex; align-items: center; justify-content: center;
`;

/* ---------- workspace ---------- */

const Workspace = styled.main`
  flex: 1; display: flex; min-height: 433px; background: #fff;
`;
const PaletteColumn = styled.aside`
  width: 262px; flex: none; display: flex; flex-direction: column; gap: 10px; padding: 6px 10px 0 6px;
`;
const Palette = styled.section<{ $wide?: boolean }>`
  width: ${(p) => (p.$wide ? 246 : 242)}px; background: #f6f5f7; border: 1px solid #b9b8ba; box-shadow: 0 0 5px #0003; display: flex; flex-direction: column;
`;
const PaletteHead = styled.div`
  display: flex; align-items: center; justify-content: space-between; height: 15px; padding: 0 2px; background: #dedddf; white-space: nowrap;
`;
const HeadButton = styled.button`
  display: flex;
`;
const TypeSelector = styled.button`
  display: flex; align-items: center; height: 62px; margin: 1px 3px 0 4px; border: 1px solid #cfced0; text-align: left; padding-right: 5px;
`;
const TypeThumb = styled.span`
  width: 58px; height: 58px; border: 1px solid #cfced0; display: flex; align-items: center; justify-content: center; margin: 0 2px 0 1px;
`;
const TypeText = styled.span`
  flex: 1;
`;
const InstanceRow = styled.div`
  display: flex; align-items: center; height: 24px; margin: 1px 3px 4px 2px;
`;
const InstancePick = styled.div`
  display: flex; align-items: center; width: 164px; height: 22px; border-bottom: 1px solid #c6c5c7; padding-right: 4px;
`;
const InstanceSelect = styled.select`
  appearance: none; flex: 1; min-width: 0; padding-left: 3px; height: 20px;
`;
const EditType = styled.button`
  display: flex; align-items: center; gap: 4px; padding-left: 4px; white-space: nowrap;
`;
const GridHead = styled.div`
  display: flex; align-items: center; height: 14px; margin: 0 3px; padding: 0 2px; background: #e7e6e8; color: #39393b; font-weight: 700;
`;
const GridHeadName = styled.span`
  flex: 1;
`;
const GridHeadIcons = styled.span`
  display: flex; align-items: center; gap: 8px;
`;
const GridArea = styled.div`
  display: flex; height: 64px; margin: 0 3px; background: #fff; overflow: hidden;
`;
const PropTable = styled.table`
  flex: 1; border-collapse: collapse; table-layout: fixed; align-self: flex-start; color: #2b2b2d;
  td, th { height: 16px; padding: 0; line-height: 14px; font-weight: 400; text-align: left; border-bottom: 1px solid #eeeeef; white-space: pre; }
  th { width: 104px; padding-left: 6px; border-right: 1px solid #e4e3e5; }
  td { padding-left: 2px; border-right: 1px solid #e4e3e5; }
`;
const PropRow = styled.tr<{ $off?: boolean }>`
  color: ${(p) => (p.$off ? "#969698" : "inherit")};
`;
const ScaleInput = styled.input`
  width: 104px; height: 15px; margin-left: -2px; padding-left: 4px; border: 1px solid #222; background: #fff; display: block;
`;
const MiniScroll = styled.div`
  width: 15px; flex: none; display: flex; flex-direction: column; align-items: center; background: #efeef0;
`;
const TableGap = styled.span`
  width: 10px; flex: none;
`;
const Thumb = styled.span<{ $w: number; $h: number }>`
  display: block; width: ${(p) => p.$w}px; height: ${(p) => p.$h}px; border-radius: 3px; background: #919093;
`;
const Fill = styled.span<{ $n?: number }>`
  flex: ${(p) => p.$n ?? 1};
`;
const PropFoot = styled.div`
  display: flex; align-items: center; gap: 4px; height: 26px; padding: 0 5px 0 4px;
`;
const SortButton = styled.button<{ $on?: boolean }>`
  width: 18px; height: 18px; display: flex; align-items: center; justify-content: center; background: ${(p) => (p.$on ? "#8ecbea" : "none")};
`;
const ApplyButton = styled.button`
  margin-left: auto; width: 62px; height: 17px; border: 1px solid #e2e1e3; color: #b9b8ba;
`;

const BrowserTabs = styled.div`
  display: flex; height: 22px; background: #c6c5c7; padding-left: 2px;
`;
const BrowserTab = styled.button<{ $on?: boolean }>`
  width: 21px; display: flex; align-items: center; justify-content: center; background: ${(p) => (p.$on ? "#fff" : "none")};
`;
const BrowserBody = styled.div`
  background: #fff; margin: 0 2px; display: flex; flex-direction: column; height: 166px;
`;
const SearchBox = styled.label`
  display: flex; align-items: center; gap: 6px; height: 22px; margin: 6px 7px; padding-left: 7px; border: 1px solid #dddcde; flex: none;
`;
const SearchInput = styled.input<{ $big?: boolean }>`
  flex: 1; min-width: 0; ${(p) => p.$big && css`font-size: 12px;`}
  &::placeholder { color: ${(p) => (p.$big ? "#4a4a4c" : "#b4b3b6")}; opacity: 1; }
`;
const TreeArea = styled.div`
  display: flex; flex: 1; min-height: 0;
`;
const Tree = styled.ul`
  list-style: none; margin: 0; padding: 0; flex: 1; overflow: hidden; color: #3a3a3c;
`;
const TreeRow = styled.li<{ $on?: boolean }>`
  height: 18px; display: flex; align-items: center; white-space: nowrap;
  ${(p) => p.$on && css`background: #f2f1f3; font-weight: 700; color: #1c1c1e;`}
`;
const TreeLabel = styled.span`
  padding-left: 4px;
`;

const Canvas = styled.div`
  flex: 1; min-width: 0; position: relative; overflow: hidden;
`;
const AccelToggle = styled.label`
  position: absolute; top: 17px; right: 35px; display: flex; align-items: center; gap: 4px; color: #77777a; white-space: nowrap;
`;
const AccelText = styled.span`
  display: flex; flex-direction: column; line-height: 12px;
`;
const Switch = styled.input`
  appearance: none; width: 31px; height: 16px; border-radius: 8px; background: radial-gradient(circle at 9px 8px, #fff 5px, #97969a 6px); margin: 0;
`;
const NavBar = styled.div`
  position: absolute; top: 3px; right: 0; width: 30px; height: 102px; border: 1px solid #bbbabc; border-radius: 4px; background: #fafafb;
  display: flex; flex-direction: column; align-items: center; justify-content: space-between; padding: 1px 0;
`;
const NavDot = styled.button`
  align-self: flex-end; margin-right: 2px; display: flex;
`;
const NavButton = styled.button`
  display: flex; flex-direction: column; align-items: center; gap: 4px;
`;
const NavRule = styled.span`
  width: 22px; border-top: 1px solid #bbbabc;
`;
const CanvasScroll = styled.div`
  width: 16px; flex: none; display: flex; flex-direction: column; align-items: center; background: #e9e8ea; padding: 5px 0 4px;
`;

const ViewBar = styled.div`
  display: flex; align-items: center; height: 15px; background: #efeef0; flex: none; padding-left: 11px;
`;
const ScaleButton = styled.button`
  width: 59px; text-align: left; flex: none; white-space: nowrap;
`;
const ViewButton = styled.button`
  width: 23px; height: 15px; flex: none; display: flex; align-items: center; justify-content: center;
`;
const HScroll = styled.div`
  flex: 1; display: flex; align-items: center; height: 15px; background: #e7e6e8; padding: 0 4px 0 2px;
`;
const StatusBar = styled.footer`
  display: flex; align-items: center; height: 23px; padding: 2px 0 0 1px; background: #f6f5f7; flex: none; white-space: nowrap;
`;
const StatusItem = styled.span<{ $w: number; $center?: boolean; $dim?: boolean }>`
  width: ${(p) => p.$w}px; flex: none; display: flex; align-items: center; color: ${(p) => (p.$dim ? "#aeadb0" : "inherit")};
  justify-content: ${(p) => (p.$center ? "center" : "flex-start")};
`;
const StatusTail = styled.div`
  margin-left: auto; display: flex; align-items: center; padding-right: 64px;
`;

const Taskbar = styled.footer`
  display: flex; height: 35px; background: #26343b; color: #eef1f2; flex: none;
`;
const TaskButton = styled.button<{ $w: number; $open?: boolean; $active?: boolean }>`
  width: ${(p) => p.$w}px; flex: none; display: flex; align-items: center; justify-content: center;
  border-bottom: 2px solid ${(p) => (p.$open ? "#f0cfa2" : "transparent")}; background: ${(p) => (p.$active ? "#536068" : "none")};
`;
const TaskApps = styled.div`
  display: flex; gap: 4px; padding-left: 6px;
`;
const TaskSearch = styled.label`
  width: 253px; flex: none; display: flex; align-items: center; gap: 10px; padding: 0 9px 0 10px; background: #f3f2f3; color: #4a4a4c;
`;
const Tray = styled.div`
  margin-left: auto; display: flex; align-items: center;
`;
const Weather = styled.button`
  display: flex; align-items: center; gap: 8px; font-size: 12px; white-space: pre; width: 110px;
`;
const ClockText = styled.button`
  width: 58px; text-align: center; line-height: 15px;
`;
const ShowDesktop = styled.button`
  width: 4px; height: 35px; border-left: 1px solid #5e696f;
`;

/* ---------- elevation drawing ---------- */

const INK = "#161616";

const Drawing = styled.svg`
  font-family: "Liberation Sans", Arial, sans-serif;
`;

const levelHeads = [
  { y: 270.5, c: "#0a3fc0" },
  { y: 328.5, c: "#0a3fc0" },
  { y: 376.5, c: "#000" },
  { y: 434, c: "#0a3fc0" },
  { y: 505.5, c: "#0a3fc0" },
];

const levelNotes: [number, string][] = [
  [269, "RIDGE LEVEL"], [282, "19' - 11\""], [327, "DORMER LEVEL"], [340, "17' - 5 13/32\""],
  [360, "FLOOR JOIST"], [374, "LEVEL"], [388, "11' - 3\""], [432, "FIRST FLOOR"], [446, "10' - 0\""],
  [504, "GROUND LEVEL"], [517, "0' - 0\""],
];

const Dormer = ({ dx }: { dx: number }) => (
  <g transform={`translate(${dx} 0)`} stroke={INK} fill="none">
    <path d="M483 382V336l24-17 25 17v46l-3-1-3 1-3-1-4 1-3-1-4 1-3-1-4 1-3-1-4 1-3-1-4 1-3-1z" fill="#fff" stroke="none" />
    <path d="M483 336.500h49M483 344.500h49M483 352.500h49M483 360.500h49M483 368.500h49M500 325.500h14M483.500 336v46M532 336v46" />
    <rect x="492.500" y="327.500" width="30" height="43" fill="#fff" />
    <path d="M493.500 328v40M520.500 328v40M494 328.500h27M494 348.500h27" strokeWidth="2.500" />
    <path d="M494 338.500h27M494 358.500h27M501.500 329v38M513.500 329v38M492 368.500h31" />
    <path d="M507.500 329v38" stroke="#888" />
    <path d="M507.500 333v8M506 339l1.500 3 1.500-3M507.500 354v8M506 356l1.500-3 1.500 3" />
    <path d="M507 309.500L541.500 333v7.500L507 319.500 473 340.500V334z" fill="#fff" />
    <path d="M507 309L541 332M507 309L473 333" strokeWidth="2" strokeDasharray="3 1" />
  </g>
);

const DoorLeaf = ({ x, panes }: { x: number; panes: number[] }) => (
  <g stroke={INK} fill="none">
    {panes.map((p) => (
      <g key={p}><rect x={p + 0.5} y="429.500" width="5" height="6" /><rect x={p + 0.5} y="437.500" width="5" height="6" /></g>
    ))}
    <rect x={x} y="449.500" width="31" height="31" />
  </g>
);

const Tick = ({ x, y }: { x: number; y: number }) => <path d={`M${x - 4} ${y + 4}l8-8`} stroke={INK} strokeWidth="1.300" />;

const Elevation = () => (
  <Drawing width="922" height="433" viewBox="262 169 922 433" role="img" aria-label="Right elevation of the detached garage">
    <defs>
      <pattern id="shingle" x="414" y="306" width="14" height="12" patternUnits="userSpaceOnUse">
        <rect width="14" height="12" fill="#0c0c0c" />
        <path d="M1 1h3v4H1zM5 2h4v3H5zM10 1h4v3h-4zM1 7h3v3H1zM5 8h4v3H5zM10 7h3v4h-3z" fill="#fff" />
        <path d="M5 1.500h2M10 4.500h2M1 10.500h2M7 7.500h2" stroke="#8a8a8a" />
      </pattern>
      <pattern id="earth" x="336" y="488" width="34" height="13" patternUnits="userSpaceOnUse">
        <path d="M2 3l5-3M12 3l4-3M21 3l5-3M29 2h4M4 9v3M13 8h6M23 9v3l4-2" stroke="#9a9a9a" fill="none" />
      </pattern>
    </defs>

    <rect x="335.500" y="191.500" width="587" height="390" fill="none" stroke="#333" />

    <g stroke={INK} fill="none" shapeRendering="crispEdges">
      <path d="M263 307.500H309M319 307.500h9M336 307.500h38M382 307.500h9M400 307.500h14M687 307.500h4M699 307.500h54M763 307.500h9M781 307.500h48" />
      <path d="M263 329.500h33M305 329.500h9M323 329.500h36M369 329.500h8M387 329.500h27M687 329.500h8M704 329.500h36M750 329.500h9M768 329.500h35M812 329.500h9M831 329.500h34" />
      <path d="M263 385.500h46M319 385.500h9M336 385.500h37M382 385.500h9M400 385.500h14M687 385.500h3M699 385.500h2M706 385.500h47M763 385.500h9M781 385.500h48" />
      <path d="M263 397.500h46M319 397.500h9M336 397.500h37M382 397.500h9M400 397.500h14M687 397.500h3M699 397.500h2M706 397.500h47M763 397.500h9M781 397.500h48" />
      <path d="M263 487.500h46M319 487.500h9" />
    </g>
    <path d="M829 307.500l17-37h18M829 385.500l17-9h18M829 397.500l17 36.500h18" stroke={INK} fill="none" />

    {([[432.5, "A"], [668.5, "B"]] as [number, string][]).map(([x, t]) => (
      <g key={t}>
        <circle cx={x} cy="241" r="18" fill="#fff" stroke={INK} />
        <path d={`M${x} 259v37`} stroke={INK} />
        <text x={x - 1} y="247" fontSize="19" textAnchor="middle" fill={INK}>{t}</text>
      </g>
    ))}

    <rect x="414" y="305.500" width="273" height="94" fill="url(#shingle)" stroke={INK} shapeRendering="crispEdges" />
    <path d="M414 329.500h70M532 329.500h60M642 329.500h45M414 385.500h273M414 397.500h273" stroke={INK} />
    <Dormer dx={0} />
    <Dormer dx={110} />

    <g stroke={INK} fill="none">
      <rect x="413.500" y="399.500" width="273" height="12" fill="#fff" />
      <path d="M413 408.500h274M432.500 399v88M668.500 399v88" />
      <path d="M433 413.500h235M433 421.500h235" strokeWidth="1.800" />
      <path d="M433 429.500h235M433 437.500h235M433 445.500h235M433 452.500h235M433 460.500h235M433 468.500h235M433 483.500h235" strokeWidth="1.600" />
      <path d="M433 476.500h235" />

      <rect x="479.500" y="423.500" width="56" height="47" fill="#fff" />
      <rect x="481.500" y="425.500" width="52" height="43" strokeWidth="1.600" />
      <path d="M506 425v44M509 425v44" strokeWidth="1.600" />
      <path d="M494 425v44M521 425v44M482 453.500h51M482 461.500h51" strokeWidth="1.600" />
      <path d="M482 432.500h51M482 439.500h51M479 446h57M479 447.500h57" />

      <rect x="576.500" y="423.500" width="79" height="64" fill="#fff" />
      <path d="M579 487V425.500h74V487" strokeWidth="1.500" />
      <path d="M577.500 424v63M654.500 424v63M616.500 426v61" />
      <path d="M614.500 426v61M618.500 426v61" stroke="#999" />
      <path d="M616 426l-36 30 36 31M616 426l36 30-36 31" strokeDasharray="6 5" />
    </g>
    <DoorLeaf x={581.5} panes={[581, 588, 594, 601, 607]} />
    <DoorLeaf x={619.5} panes={[619, 626, 632, 639, 645]} />

    <rect x="336" y="487" width="586" height="13" fill="#f2f2f2" />
    <rect x="336" y="487" width="586" height="13" fill="url(#earth)" />
    <path d="M336 487.500h587M336 500h587" stroke="#000" strokeWidth="2" />
    <path d="M336 490.500h587M336 495.500h587" stroke={INK} />
    <path d="M757 494h100v8H757z" fill="#fff" />
    <path d="M829 487l17 18.500h18" stroke={INK} fill="none" />

    {levelHeads.map(({ y, c }) => (
      <g key={y}>
        <circle cx="874" cy={y} r="9.500" fill="#fff" stroke={c} />
        <path d={`M874 ${y}V${y - 9.5}A9.500 9.500 0 0 0 864.500 ${y}zM874 ${y}V${y + 9.5}A9.500 9.500 0 0 0 883.500 ${y}z`} fill={c} />
      </g>
    ))}
    <g fontSize="13" textAnchor="end" fill="#222">
      {levelNotes.map(([y, t]) => <text key={y} x="857" y={y}>{t}</text>)}
    </g>

    <g stroke={INK}>
      <path d="M715.500 300v193M734 300v193M425 522.500h250M425 541h250" />
      <path d="M432.500 495v10M432.500 516v33M436.500 494v12M436.500 516v14M507.500 477v52M616.500 487v42M668.500 495v10M668.500 515v34" />
    </g>
    {[432.5, 436.5, 507.5, 616.5, 668.5].map((x) => <Tick key={x} x={x} y={522.5} />)}
    {[432.5, 668.5].map((x) => <Tick key={x} x={x} y={541} />)}
    {[307.5, 385.5, 397.5, 487.5].map((y) => <path key={y} d={`M711.500 ${y - 4}l8 8`} stroke={INK} strokeWidth="1.300" />)}
    {[307.5, 487.5].map((y) => <path key={y} d={`M730 ${y - 4}l8 8`} stroke={INK} strokeWidth="1.300" />)}

    <g fontSize="9" fill="#000">
      <text x="421" y="515">0' - 5"</text>
      <text x="456" y="515">7' - 10"</text>
      <text x="546" y="515">12' - 0"</text>
      <text x="629" y="515">5' - 9"</text>
      <text x="534" y="533">26' - 0"</text>
      <text transform="translate(709 358) rotate(-90)">8' - 8"</text>
      <text transform="translate(709 403) rotate(-90)">1' - 3"</text>
      <text transform="translate(709 457) rotate(-90)">10' - 0"</text>
      <text transform="translate(727 414) rotate(-90)">19' - 11"</text>
    </g>
  </Drawing>
);

/* ---------- data ---------- */

type Tool = [string, string, number?];
const quickTools: Tool[] = [
  ["revit", "Revit", 20], ["list", "Home", 26], ["open", "Open"], ["save", "Save"], ["sync", "Synchronize"], ["caret", "Synchronize options", 12],
  ["undo", "Undo"], ["caret", "Undo list", 10], ["redo", "Redo"], ["caret", "Redo list", 11], ["print", "Print"], ["pdf", "Export PDF"], ["|", "", 0],
  ["align", "Pin dimension", 24], ["|", "", 0], ["ruler", "Measure", 22], ["caret", "Measure options", 10], ["dim", "Aligned dimension", 22], ["tag", "Tag"], ["letterA", "Text"], ["|", "", 0],
  ["house", "Default 3D view", 24], ["caret", "3D options", 9], ["diamond", "Section"], ["thin", "Thin lines", 22], ["|", "", 0],
  ["closeViews", "Close inactive views", 24], ["switchViews", "Switch windows", 20], ["caret", "Window list", 9], ["customize", "Customize toolbar", 18],
];

const ribbonTabs = ["Structure", "Steel", "Precast", "Systems", "Insert", "Annotate", "Analyze", "Massing & Site", "Collaborate", "View", "Manage", "Add-Ins", "Modify"];

const viewTabs: { name: string; icon: string; w: number; on?: boolean }[] = [
  { name: "PERSPECTIVE VIEW 4", icon: "tab3d", w: 142 },
  { name: "SOUTH EAST ISOMETRIC", icon: "tab3d", w: 160 },
  { name: "SOUTH WEST ISOMETRIC", icon: "tab3d", w: 164 },
  { name: "BACK ELEVATION", icon: "tabElev", w: 124 },
  { name: "FRONT ELEVATION", icon: "tabElev", w: 132 },
  { name: "LEFT ELEVATION", icon: "tabElev", w: 120 },
  { name: "RIGHT ELEVATION", icon: "tabElevOn", w: 136, on: true },
  { name: "A101 - ELEVATION AND 3D", icon: "tabSheet", w: 170 },
];

const viewControls: [string, string][] = [
  ["vcDetail", "Detail level"], ["vcStyle", "Visual style"], ["vcSun", "Sun path"], ["vcShadow", "Shadows"], ["vcCrop", "Crop view"], ["vcCropVis", "Show crop region"],
  ["vcGlasses", "Temporary hide"], ["vcBulb", "Reveal hidden"], ["vcTemp", "Temporary view properties"], ["vcAnalytical", "Analytical model"], ["vcConstraint", "Reveal constraints"],
];

const Big = ({ icon, label, w, caret, on }: { icon: string; label: React.ReactNode; w: number; caret?: boolean; on?: boolean }) => (
  <BigButton $w={w} $on={on}>
    <BigArt><Icon name={icon} /></BigArt>
    {label}
    {caret && <BigCaret><Icon name="caret" /></BigCaret>}
  </BigButton>
);

const Small = ({ icon, label, caret, off }: { icon: string; label: string; caret?: boolean; off?: boolean }) => (
  <SmallButton $off={off} disabled={off}>
    <SmallArt><Icon name={icon} /></SmallArt>
    {label}
    {caret && <SmallCaret><Icon name="caret" /></SmallCaret>}
  </SmallButton>
);

const TreeGuide = ({ last }: { last?: boolean }) => (
  <svg width="47" height="18" viewBox="0 0 47 18" aria-hidden="true">
    <path d={`M8.500 0v18M22.500 0v${last ? 9 : 18}M22.500 9.500H44`} stroke="#b4b3b5" strokeDasharray="3 2" fill="none" />
  </svg>
);

/* ---------- page ---------- */

export default function App() {
  return (
    <Shell>
      <GlobalStyle />
      <TitleBar>
        {quickTools.map(([icon, label, w], i) =>
          icon === "|" ? <ToolDivider key={i} /> : <ToolButton key={i} $w={w} aria-label={label}><Icon name={icon} /></ToolButton>
        )}
        <DocTitle>Detached Garage Elevation Drawings - Elevation: RIGHT ELEVATION</DocTitle>
        <ToolButton $w={12} aria-label="Collapse info bar"><Icon name="back" /></ToolButton>
        <ToolButton aria-label="Search help"><Icon name="binoculars" /></ToolButton>
        <Account><Icon name="user" />emon.chowd...<Fill /><Icon name="caret" /></Account>
        <TrialBadge><Icon name="clock" />19</TrialBadge>
        <ToolButton aria-label="App store"><Icon name="cart" /></ToolButton>
        <ToolDivider />
        <ToolButton $w={28} aria-label="Help"><Icon name="help" /></ToolButton>
        <ToolButton $w={9} aria-label="Help options"><Icon name="caret" /></ToolButton>
        <WindowButtons>
          <ToolButton $w={23} aria-label="Minimize"><Icon name="minimize" /></ToolButton>
          <ToolButton aria-label="Restore"><Icon name="restore" /></ToolButton>
          <ToolButton aria-label="Close"><Icon name="closeX" /></ToolButton>
        </WindowButtons>
      </TitleBar>

      <RibbonTabs>
        <RibbonTab $kind="file">File</RibbonTab>
        <RibbonTab $kind="active">Architecture</RibbonTab>
        {ribbonTabs.map((t) => <RibbonTab key={t}>{t}</RibbonTab>)}
        <RibbonState aria-label="Ribbon display"><Icon name="ribbonState" /><Icon name="caret" /></RibbonState>
      </RibbonTabs>

      <Ribbon>
        <Panel $w={50}>
          <PanelBody><Big icon="cursor" label="Modify" w={39} on /></PanelBody>
          <PanelName>Select<Icon name="caretBig" /></PanelName>
        </Panel>
        <Panel $w={416}>
          <PanelBody $pad={3}>
            <Big icon="wall" label="Wall" w={36} caret />
            <Big icon="door" label="Door" w={38} />
            <Big icon="window" label="Window" w={42} />
            <Big icon="component" label="Component" w={76} caret />
            <Big icon="column" label="Column" w={56} caret />
            <Stack $w={66} $pad={5}>
              <Small icon="roof" label="Roof" caret />
              <Small icon="ceiling" label="Ceiling" />
              <Small icon="floor" label="Floor" caret />
            </Stack>
            <Stack $w={94}>
              <Small icon="curtainSystem" label="Curtain  System" />
              <Small icon="curtainGrid" label="Curtain  Grid" />
              <Small icon="mullion" label="Mullion" />
            </Stack>
          </PanelBody>
          <PanelName>Build</PanelName>
        </Panel>
        <Panel $w={74}>
          <PanelBody>
            <Stack $w={66}>
              <Small icon="railing" label="Railing" caret />
              <Small icon="ramp" label="Ramp" />
              <Small icon="stair" label="Stair" />
            </Stack>
          </PanelBody>
          <PanelName>Circulation</PanelName>
        </Panel>
        <Panel $w={106}>
          <PanelBody>
            <Stack $w={98}>
              <Small icon="modelText" label="Model  Text" />
              <Small icon="modelLine" label="Model  Line" />
              <Small icon="modelGroup" label="Model  Group" caret />
            </Stack>
          </PanelBody>
          <PanelName>Model</PanelName>
        </Panel>
        <Panel $w={207}>
          <PanelBody>
            <Stack $w={104}>
              <Small icon="room" label="Room" caret off />
              <Small icon="roomSep" label="Room  Separator" off />
              <Small icon="tagRoom" label="Tag  Room" caret />
            </Stack>
            <Stack $w={96}>
              <Small icon="area" label="Area" caret />
              <Small icon="areaBoundary" label="Area  Boundary" off />
              <Small icon="tagArea" label="Tag  Area" caret />
            </Stack>
          </PanelBody>
          <PanelName>Room &amp; Area<Icon name="caretBig" /></PanelName>
        </Panel>
        <Panel $w={133}>
          <PanelBody $pad={2}>
            <Big icon="byFace" label={<>By<br />Face</>} w={33} />
            <Big icon="shaft" label="Shaft" w={34} />
            <Stack $w={62} $pad={3}>
              <Small icon="wallOpen" label="Wall" />
              <Small icon="vertical" label="Vertical" />
              <Small icon="dormer" label="Dormer" />
            </Stack>
          </PanelBody>
          <PanelName>Opening</PanelName>
        </Panel>
        <Panel $w={57}>
          <PanelBody>
            <Stack $w={50}>
              <Small icon="level" label="Level" />
              <Small icon="grid" label="Grid" />
            </Stack>
          </PanelBody>
          <PanelName>Datum</PanelName>
        </Panel>
        <Panel $w={110}>
          <PanelBody $pad={3}>
            <Big icon="setPlane" label="Set" w={30} caret />
            <Stack $w={74} $pad={5}>
              <Small icon="show" label="Show" />
              <Small icon="refPlane" label="Ref  Plane" />
              <Small icon="viewer" label="Viewer" off />
            </Stack>
          </PanelBody>
          <PanelName>Work Plane</PanelName>
        </Panel>
      </Ribbon>
      <RibbonSpacer />

      <ViewTabs>
        {viewTabs.map((t) => (
          <ViewTab key={t.name} $w={t.w} $on={t.on}>
            <Icon name={t.icon} />{t.name}{t.on && <Icon name="closeSm" />}
          </ViewTab>
        ))}
        <TabMenu aria-label="Open views"><Icon name="customize" /></TabMenu>
      </ViewTabs>

      <Workspace>
        <PaletteColumn>
          <Palette>
            <PaletteHead>Properties<HeadButton aria-label="Close properties"><Icon name="closeSm" /></HeadButton></PaletteHead>
            <TypeSelector>
              <TypeThumb><Icon name="elevThumb" /></TypeThumb>
              <TypeText>Elevation<br />Building Elevation</TypeText>
              <Icon name="caretSoft" />
            </TypeSelector>
            <InstanceRow>
              <InstancePick>
                <InstanceSelect aria-label="Instance"><option>Elevation: RIGHT ELEVATION</option></InstanceSelect>
                <Icon name="caretSoft" />
              </InstancePick>
              <EditType><Icon name="editType" />Edit Type</EditType>
            </InstanceRow>
            <GridHead>
              <GridHeadName>Graphics</GridHeadName>
              <GridHeadIcons><Icon name="collapse" /><Icon name="chevUp" /></GridHeadIcons>
            </GridHead>
            <GridArea>
              <PropTable>
                <tbody>
                  <PropRow><th scope="row"><label htmlFor="scale">View Scale</label></th><td><ScaleInput id="scale" defaultValue={"1/8\" = 1'-0\""} /></td></PropRow>
                  <PropRow $off><th scope="row">Scale Value    1:</th><td>96</td></PropRow>
                  <PropRow><th scope="row">Display Model</th><td>Normal</td></PropRow>
                  <PropRow><th scope="row">Detail Level</th><td>Fine</td></PropRow>
                </tbody>
              </PropTable>
              <TableGap />
              <MiniScroll><Thumb $w={7} $h={7} /><Fill /><Icon name="chevDown" /></MiniScroll>
            </GridArea>
            <PropFoot>
              <SortButton $on aria-label="Group by category"><Icon name="sortCat" /></SortButton>
              <SortButton aria-label="Sort ascending"><Icon name="sortAZ" /></SortButton>
              <SortButton aria-label="Sort descending"><Icon name="sortZA" /></SortButton>
              <ApplyButton disabled>Apply</ApplyButton>
            </PropFoot>
          </Palette>

          <Palette $wide>
            <PaletteHead>Project Browser - Detached Garage Elevation...<HeadButton aria-label="Close project browser"><Icon name="closeSm" /></HeadButton></PaletteHead>
            <BrowserTabs>
              {["pbHome", "pbViews", "pbLegend", "pbTable", "pbSheet", "pbFamily", "modelGroup", "pbLink"].map((n, i) => (
                <BrowserTab key={n} $on={i === 0} aria-label={`Browser filter ${i + 1}`}><Icon name={n} /></BrowserTab>
              ))}
            </BrowserTabs>
            <BrowserBody>
              <SearchBox><Icon name="search" /><SearchInput aria-label="Search the project" placeholder="Search" /></SearchBox>
              <TreeArea>
                <Tree>
                  <TreeRow><TreeGuide /><Icon name="viewSq" /><TreeLabel>FRONT ELEVATION</TreeLabel></TreeRow>
                  <TreeRow><TreeGuide /><Icon name="viewSq" /><TreeLabel>LEFT ELEVATION</TreeLabel></TreeRow>
                  <TreeRow $on><TreeGuide last /><Icon name="viewSq" /><TreeLabel>RIGHT ELEVATION</TreeLabel></TreeRow>
                  <TreeRow>
                    <svg width="29" height="18" viewBox="0 0 29 18" aria-hidden="true"><path d="M8.500 0v9.500H16" stroke="#b4b3b5" strokeDasharray="3 2" fill="none" /><path d="M18 9h7M21.500 5.500v7" stroke="#555" strokeWidth="1.300" /></svg>
                    <TreeLabel>Sections (Building Section)</TreeLabel>
                  </TreeRow>
                  <TreeRow><svg width="18" height="18" aria-hidden="true" /><Icon name="pbLegend" /><TreeLabel>Legends</TreeLabel></TreeRow>
                  <TreeRow><svg width="18" height="18" aria-hidden="true" /><Icon name="pbTable" /><TreeLabel>Schedules/Quantities (all)</TreeLabel></TreeRow>
                  <TreeRow>
                    <svg width="18" height="18" viewBox="0 0 18 18" aria-hidden="true"><path d="M4 9h7" stroke="#555" strokeWidth="1.300" /></svg>
                    <Icon name="pbSheet" /><TreeLabel>Sheets (all)</TreeLabel>
                  </TreeRow>
                </Tree>
                <MiniScroll><Fill /><Icon name="chevUp" /><Fill $n={9} /><Thumb $w={7} $h={22} /><Fill $n={6} /><Icon name="chevDown" /><Fill /></MiniScroll>
              </TreeArea>
            </BrowserBody>
          </Palette>
        </PaletteColumn>

        <Canvas>
          <Elevation />
          <AccelToggle>
            <Switch type="checkbox" />
            <AccelText><span>Accelerated Graphics</span><em>Tech Preview</em></AccelText>
          </AccelToggle>
          <NavBar>
            <NavDot aria-label="Close navigation bar"><Icon name="navDot" /></NavDot>
            <NavButton aria-label="Steering wheel"><Icon name="navWheel" /><Icon name="caret" /></NavButton>
            <NavRule />
            <NavButton aria-label="Zoom region"><Icon name="navZoom" /><Icon name="caret" /></NavButton>
            <NavDot aria-label="Navigation bar options"><Icon name="navDot" /></NavDot>
          </NavBar>
        </Canvas>
        <CanvasScroll><Icon name="chevUp" /><Fill $n={200} /><Thumb $w={7} $h={15} /><Fill $n={197} /><Icon name="chevDown" /></CanvasScroll>
      </Workspace>

      <ViewBar>
        <ScaleButton>{"1/8\" = 1'-0\""}</ScaleButton>
        {viewControls.map(([icon, label]) => <ViewButton key={icon} aria-label={label}><Icon name={icon} /></ViewButton>)}
        <HScroll><Icon name="chevLeft" /><Fill $n={415} /><Thumb $w={15} $h={7} /><Fill $n={415} /><Icon name="chevRight" /></HScroll>
        <ToolButton $w={16} aria-label="Resize"><Icon name="grip" /></ToolButton>
      </ViewBar>

      <StatusBar>
        <StatusItem $w={298}>Click to select, TAB for alternates, CTRL adds, SHIFT unselects.</StatusItem>
        <StatusItem $w={192}><Icon name="stShare" /></StatusItem>
        <StatusItem $w={18}><Icon name="chevFaint" /></StatusItem>
        <StatusItem $w={44}><Icon name="stWork" />:0</StatusItem>
        <StatusItem $w={24}><Icon name="stOptions" /></StatusItem>
        <StatusItem $w={24}><Icon name="stMain" /></StatusItem>
        <StatusItem $w={168} $dim>Main Model</StatusItem>
        <StatusItem $w={12}><Icon name="chevFaint" /></StatusItem>
        <StatusTail>
          {["selLink", "selUnder", "selPin", "selFace", "selDrag", "bgProc"].map((n) => <StatusItem key={n} $w={23} $center><Icon name={n} /></StatusItem>)}
          <StatusItem $w={25}><Icon name="filter" />:0</StatusItem>
        </StatusTail>
      </StatusBar>

      <Taskbar>
        <TaskButton $w={42} aria-label="Start"><Icon name="win" /></TaskButton>
        <TaskSearch><Icon name="glass" /><SearchInput $big aria-label="Type here to search" placeholder="Type here to search" /><Icon name="sparkle" /></TaskSearch>
        <TaskButton $w={42} aria-label="Task view"><Icon name="taskview" /></TaskButton>
        <TaskApps>
          <TaskButton $w={36} $open aria-label="Chrome"><Icon name="chrome" /></TaskButton>
          <TaskButton $w={42} $open $active aria-label="Revit"><Icon name="revitTask" /></TaskButton>
        </TaskApps>
        <Tray>
          <Weather><Icon name="sun" />27°C  Sunny</Weather>
          <ToolButton $w={22} aria-label="Hidden icons"><Icon name="trayUp" /></ToolButton>
          <ToolButton aria-label="Meet now"><Icon name="trayMeet" /></ToolButton>
          <ToolButton aria-label="Battery"><Icon name="trayBattery" /></ToolButton>
          <ToolButton aria-label="Network"><Icon name="trayWifi" /></ToolButton>
          <ToolButton aria-label="Volume"><Icon name="trayVol" /></ToolButton>
          <ClockText>1:59 PM<br />1/21/2026</ClockText>
          <ToolButton $w={42} aria-label="Notifications"><Icon name="trayNote" /></ToolButton>
          <ShowDesktop aria-label="Show desktop" />
        </Tray>
      </Taskbar>
    </Shell>
  );
}
